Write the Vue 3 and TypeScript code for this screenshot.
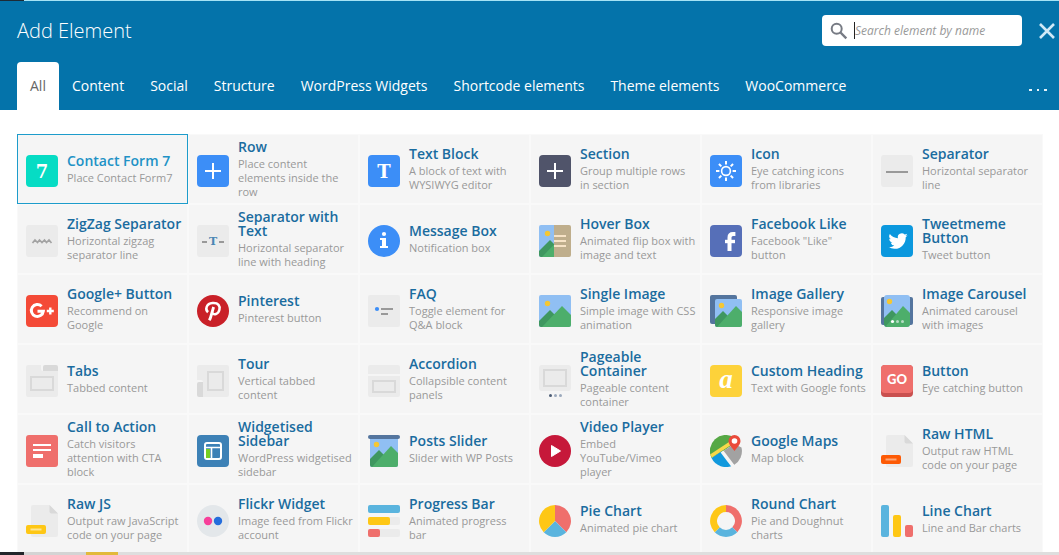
<script setup lang="ts">
import { ref } from 'vue'

interface ElementItem {
  title: string
  text: string
  icon: string
}

const tabs: string[] = [
  'All',
  'Content',
  'Social',
  'Structure',
  'WordPress Widgets',
  'Shortcode elements',
  'Theme elements',
  'WooCommerce',
]
const activeTab = ref('All')
const query = ref('')
const selected = ref('Contact Form 7')

const items: ElementItem[] = [
  { title: 'Contact Form 7', text: 'Place Contact Form7', icon: 'seven' },
  { title: 'Row', text: 'Place content elements inside the row', icon: 'row' },
  { title: 'Text Block', text: 'A block of text with WYSIWYG editor', icon: 'text' },
  { title: 'Section', text: 'Group multiple rows in section', icon: 'section' },
  { title: 'Icon', text: 'Eye catching icons from libraries', icon: 'sun' },
  { title: 'Separator', text: 'Horizontal separator line', icon: 'separator' },
  { title: 'ZigZag Separator', text: 'Horizontal zigzag separator line', icon: 'zigzag' },
  { title: 'Separator with Text', text: 'Horizontal separator line with heading', icon: 'septext' },
  { title: 'Message Box', text: 'Notification box', icon: 'info' },
  { title: 'Hover Box', text: 'Animated flip box with image and text', icon: 'hover' },
  { title: 'Facebook Like', text: 'Facebook "Like" button', icon: 'facebook' },
  { title: 'Tweetmeme Button', text: 'Tweet button', icon: 'twitter' },
  { title: 'Google+ Button', text: 'Recommend on Google', icon: 'gplus' },
  { title: 'Pinterest', text: 'Pinterest button', icon: 'pinterest' },
  { title: 'FAQ', text: 'Toggle element for Q&A block', icon: 'faq' },
  { title: 'Single Image', text: 'Simple image with CSS animation', icon: 'image' },
  { title: 'Image Gallery', text: 'Responsive image gallery', icon: 'gallery' },
  { title: 'Image Carousel', text: 'Animated carousel with images', icon: 'carousel' },
  { title: 'Tabs', text: 'Tabbed content', icon: 'tabs' },
  { title: 'Tour', text: 'Vertical tabbed content', icon: 'tour' },
  { title: 'Accordion', text: 'Collapsible content panels', icon: 'accordion' },
  { title: 'Pageable Container', text: 'Pageable content container', icon: 'pageable' },
  { title: 'Custom Heading', text: 'Text with Google fonts', icon: 'heading' },
  { title: 'Button', text: 'Eye catching button', icon: 'button' },
  { title: 'Call to Action', text: 'Catch visitors attention with CTA block', icon: 'cta' },
  { title: 'Widgetised Sidebar', text: 'WordPress widgetised sidebar', icon: 'sidebar' },
  { title: 'Posts Slider', text: 'Slider with WP Posts', icon: 'slider' },
  { title: 'Video Player', text: 'Embed YouTube/Vimeo player', icon: 'video' },
  { title: 'Google Maps', text: 'Map block', icon: 'maps' },
  { title: 'Raw HTML', text: 'Output raw HTML code on your page', icon: 'rawhtml' },
  { title: 'Raw JS', text: 'Output raw JavaScript code on your page', icon: 'rawjs' },
  { title: 'Flickr Widget', text: 'Image feed from Flickr account', icon: 'flickr' },
  { title: 'Progress Bar', text: 'Animated progress bar', icon: 'progress' },
  { title: 'Pie Chart', text: 'Animated pie chart', icon: 'pie' },
  { title: 'Round Chart', text: 'Pie and Doughnut charts', icon: 'round' },
  { title: 'Line Chart', text: 'Line and Bar charts', icon: 'bars' },
]

const rays: number[] = [0, 45, 90, 135, 180, 225, 270, 315]
</script>

<template>
  <div class="screen">
    <div class="strip-top"></div>
    <main class="panel">
      <header class="header">
        <div class="title-row">
          <h1>Add Element</h1>
          <label class="search">
            <svg class="search-icon" viewBox="0 0 18 18" aria-hidden="true">
              <circle cx="6.7" cy="6.7" r="5" fill="none" stroke="#777b84" stroke-width="2" />
              <path d="M10.5 10.5L16.3 16.3" stroke="#777b84" stroke-width="2.4" />
            </svg>
            <span class="caret"></span>
            <input v-model="query" type="text" placeholder="Search element by name" aria-label="Search element by name" />
          </label>
          <button class="close" type="button" aria-label="Close">
            <svg viewBox="0 0 16 16"><path d="M1 1L15 15M15 1L1 15" stroke="#cfe9f7" stroke-width="2.6" /></svg>
          </button>
        </div>
        <nav class="tabs">
          <button
            v-for="tab in tabs"
            :key="tab"
            type="button"
            class="tab"
            :class="{ active: tab === activeTab }"
            @click="activeTab = tab"
          >{{ tab }}</button>
          <button class="more" type="button" aria-label="More">
            <svg viewBox="0 0 20 4"><path d="M1 1h3v2H1zM9 1h2v2H9zM16 1h3v2h-3z" fill="#e6f3fa" /></svg>
          </button>
        </nav>
      </header>

      <section class="body">
        <ul class="grid">
          <li v-for="item in items" :key="item.title">
            <a href="#" class="card" :class="{ selected: item.title === selected }" @click.prevent="selected = item.title">
              <svg class="icon" viewBox="0 0 32 32" aria-hidden="true">
                <template v-if="item.icon === 'seven'">
                  <rect width="32" height="32" rx="4" fill="#06dcc4" />
                  <text x="16" y="23" class="slab" font-size="18">7</text>
                </template>
                <template v-else-if="item.icon === 'row'">
                  <rect width="32" height="32" rx="4" fill="#3c8ef7" />
                  <path d="M8 16h16M16 8v16" stroke="#fff" stroke-width="2" />
                </template>
                <template v-else-if="item.icon === 'text'">
                  <rect width="32" height="32" rx="4" fill="#3c8ef7" />
                  <text x="16" y="23" class="slab" font-size="18">T</text>
                </template>
                <template v-else-if="item.icon === 'section'">
                  <rect width="32" height="32" rx="4" fill="#50546a" />
                  <path d="M8 16h16M16 8v16" stroke="#fff" stroke-width="2" />
                </template>
                <template v-else-if="item.icon === 'sun'">
                  <rect width="32" height="32" rx="4" fill="#3c8ef7" />
                  <circle cx="16" cy="16" r="4.4" fill="none" stroke="#fff" stroke-width="1.6" />
                  <path
                    v-for="angle in rays"
                    :key="angle"
                    d="M16 6v3.4"
                    stroke="#fff"
                    stroke-width="2"
                    :transform="`rotate(${angle} 16 16)`"
                  />
                </template>
                <template v-else-if="item.icon === 'separator'">
                  <rect width="32" height="32" rx="3" fill="#ebebeb" />
                  <path d="M5 17h22" stroke="#999" stroke-width="2" />
                </template>
                <template v-else-if="item.icon === 'zigzag'">
                  <rect width="32" height="32" rx="3" fill="#ebebeb" />
                  <path d="M6.5 18L9 15L11.500 17.500L13.500 15L16 17.500L18.500 15L20.500 17.500L23 15L25.500 18" fill="none" stroke="#a3a3a3" stroke-width="1.7" />
                </template>
                <template v-else-if="item.icon === 'septext'">
                  <rect width="32" height="32" rx="3" fill="#ebebeb" />
                  <path d="M5 17h5M22 17h5" stroke="#999" stroke-width="2" />
                  <text x="16" y="20" class="slab blue" font-size="11">T</text>
                </template>
                <template v-else-if="item.icon === 'info'">
                  <circle cx="16" cy="16" r="16" fill="#3c8ef7" />
                  <circle cx="16" cy="9" r="2.1" fill="#fff" />
                  <path d="M12 13h6v8h2v2h-8v-2h2v-6h-2z" fill="#fff" />
                </template>
                <template v-else-if="item.icon === 'hover'">
                  <path d="M2 0h13v32H2a2 2 0 0 1-2-2V2a2 2 0 0 1 2-2z" fill="#90bff3" />
                  <path d="M15 0h15a2 2 0 0 1 2 2v28a2 2 0 0 1-2 2H15z" fill="#bfae8c" />
                  <path d="M0 26L11 15l4 4v13H2a2 2 0 0 1-2-2z" fill="#3f9760" />
                  <path d="M3 32L15 19.500v12.500z" fill="#4dae6b" />
                  <circle cx="8.500" cy="8.500" r="2.700" fill="#f5c733" />
                  <path d="M15 11h12M15 16h12M15 21h12" stroke="#f7e3c6" stroke-width="2" />
                </template>
                <template v-else-if="item.icon === 'facebook'">
                  <rect width="32" height="32" rx="4" fill="#566fb8" />
                  <path d="M19.500 26V12.500C19.500 9.800 21 9 23 9h2.400" fill="none" stroke="#fff" stroke-width="4" />
                  <path d="M15 16.500h10" stroke="#fff" stroke-width="3.400" />
                </template>
                <template v-else-if="item.icon === 'twitter'">
                  <rect width="32" height="32" rx="4" fill="#0b98de" />
                  <path
                    transform="translate(7.500 6.500) scale(.8)"
                    d="M24 4.600a10 10 0 0 1-2.800.8 5 5 0 0 0 2.100-2.700c-.9.500-2 1-3.100 1.200a4.900 4.900 0 0 0-8.400 4.500C7.700 8.100 4.100 6.100 1.700 3.100a4.900 4.900 0 0 0 1.500 6.600c-.8 0-1.600-.2-2.200-.6v.1a4.900 4.900 0 0 0 3.900 4.800c-.7.200-1.500.2-2.200.1a4.900 4.900 0 0 0 4.600 3.400A9.900 9.900 0 0 1 0 19.500a14 14 0 0 0 7.500 2.200c9.100 0 14-7.500 14-14v-.6A10 10 0 0 0 24 4.600z"
                    fill="#fff"
                  />
                </template>
                <template v-else-if="item.icon === 'gplus'">
                  <rect width="32" height="32" rx="4" fill="#f44a37" />
                  <path d="M15.600 11.200A6 6 0 1 0 17.300 16.200H11.500" fill="none" stroke="#fff" stroke-width="3" />
                  <path d="M20.800 16h7M24.300 12.500v7" stroke="#fff" stroke-width="2.400" />
                </template>
                <template v-else-if="item.icon === 'pinterest'">
                  <circle cx="16" cy="16" r="16" fill="#c92028" />
                  <path d="M11 17.300C7.800 14.500 9.200 8.600 15.500 8.100C21.500 7.600 23.300 11 22.400 14.800C21.400 19.300 16.700 20.600 15.200 17.700" fill="none" stroke="#fff" stroke-width="2.500" />
                  <path d="M16.600 12L13.700 22C13.300 23.500 12.900 24.300 12.200 25.300" fill="none" stroke="#fff" stroke-width="2.800" />
                </template>
                <template v-else-if="item.icon === 'faq'">
                  <rect width="32" height="32" rx="2" fill="#ebebeb" />
                  <circle cx="9" cy="14" r="2.100" fill="#3c8ef7" />
                  <path d="M13 14h12M13 19h7" stroke="#999" stroke-width="2" />
                </template>
                <template v-else-if="item.icon === 'image'">
                  <rect width="32" height="32" rx="2" fill="#90bff3" />
                  <path d="M0 26L11 15l8 8v9H2a2 2 0 0 1-2-2z" fill="#3f9760" />
                  <path d="M3 32L23 11l9 9v10a2 2 0 0 1-2 2z" fill="#4dae6b" />
                  <circle cx="8.500" cy="8.500" r="2.700" fill="#f5c733" />
                </template>
                <template v-else-if="item.icon === 'gallery'">
                  <rect width="27" height="29" rx="2" fill="#54759e" />
                  <rect x="5" y="4" width="27" height="28" rx="2" fill="#90bff3" />
                  <path d="M5 24l8-8 7 7v9H7a2 2 0 0 1-2-2z" fill="#3f9760" />
                  <path d="M7 32L26 11l6 6v13a2 2 0 0 1-2 2z" fill="#4dae6b" />
                  <circle cx="11.500" cy="10.500" r="2.700" fill="#f5c733" />
                </template>
                <template v-else-if="item.icon === 'carousel'">
                  <rect y="2" width="32" height="28" rx="2" fill="#54759e" />
                  <rect x="3" width="26" height="32" rx="3" fill="#90bff3" />
                  <path d="M3 23l8-8 8 8v9H6a3 3 0 0 1-3-3z" fill="#3f9760" />
                  <path d="M5 31L22 11l7 7v11a3 3 0 0 1-3 3H6z" fill="#4dae6b" />
                  <circle cx="8.500" cy="6.500" r="2.700" fill="#f5c733" />
                  <circle cx="11.500" cy="26.500" r="1.600" fill="#fff" />
                  <circle cx="16.500" cy="26.500" r="1.500" fill="#b5dcc2" />
                  <circle cx="21.500" cy="26.500" r="1.500" fill="#b5dcc2" />
                </template>
                <template v-else-if="item.icon === 'tabs'">
                  <path d="M2 0h13v4a2 2 0 0 0 2 2h15v24a2 2 0 0 1-2 2H2a2 2 0 0 1-2-2V2a2 2 0 0 1 2-2z" fill="#ebebeb" />
                  <path d="M19 0h11a2 2 0 0 1 2 2v4H17V2a2 2 0 0 1 2-2z" fill="#d9d9d9" />
                  <rect x="5" y="12" width="22" height="13" fill="none" stroke="#d9d9d9" stroke-width="2" />
                </template>
                <template v-else-if="item.icon === 'tour'">
                  <path d="M2 0h28a2 2 0 0 1 2 2v28a2 2 0 0 1-2 2H6V17a2 2 0 0 0-2-2H0V2a2 2 0 0 1 2-2z" fill="#ebebeb" />
                  <path d="M2 17h4v15H2a2 2 0 0 1-2-2V19a2 2 0 0 1 2-2z" fill="#d9d9d9" />
                  <rect x="11" y="7" width="15" height="18" fill="none" stroke="#d9d9d9" stroke-width="2" />
                </template>
                <template v-else-if="item.icon === 'accordion'">
                  <path d="M2 0h28a2 2 0 0 1 2 2v7H0V2a2 2 0 0 1 2-2zM0 11h32v19a2 2 0 0 1-2 2H2a2 2 0 0 1-2-2z" fill="#ebebeb" />
                  <rect x="5" y="16" width="22" height="11" fill="none" stroke="#d9d9d9" stroke-width="2" />
                </template>
                <template v-else-if="item.icon === 'pageable'">
                  <rect width="32" height="26" rx="3" fill="#ebebeb" />
                  <rect x="5" y="5" width="22" height="16" fill="none" stroke="#d9d9d9" stroke-width="2" />
                  <circle cx="11.500" cy="30.500" r="1.500" fill="#4b5c75" />
                  <circle cx="16.500" cy="30.500" r="1.500" fill="#9ba9bc" />
                  <circle cx="21.500" cy="30.500" r="1.500" fill="#9ba9bc" />
                </template>
                <template v-else-if="item.icon === 'heading'">
                  <rect width="32" height="32" rx="4" fill="#fdd23a" />
                  <text x="16" y="23" class="slab italic" font-size="27">a</text>
                </template>
                <template v-else-if="item.icon === 'button'">
                  <rect width="32" height="32" rx="4" fill="#c9504f" />
                  <rect width="32" height="28" rx="4" fill="#ef6f6c" />
                  <text x="16" y="19" class="sans" font-size="13">GO</text>
                </template>
                <template v-else-if="item.icon === 'cta'">
                  <rect width="32" height="32" rx="3" fill="#ef6f6c" />
                  <path d="M7 10h18M7 15h18" stroke="#fff" stroke-width="2" />
                  <path d="M7 21h10" stroke="#fff" stroke-width="4" />
                </template>
                <template v-else-if="item.icon === 'sidebar'">
                  <rect width="32" height="32" rx="4" fill="#3d81b6" />
                  <rect x="8" y="8" width="16" height="16" rx="2" fill="none" stroke="#fff" stroke-width="2" />
                  <path d="M8 12.500h16M14.500 13v11" stroke="#fff" stroke-width="1.600" />
                  <path d="M9 14h4v9H9z" fill="#76cf21" />
                </template>
                <template v-else-if="item.icon === 'slider'">
                  <path d="M2 3h28v27a2 2 0 0 1-2 2H4a2 2 0 0 1-2-2z" fill="#90bff3" />
                  <path d="M2 24l9-9 8 8v9H4a2 2 0 0 1-2-2z" fill="#3f9760" />
                  <path d="M4 32L23 11l7 7v12a2 2 0 0 1-2 2z" fill="#4dae6b" />
                  <rect width="32" height="4" rx="2" fill="#54759e" />
                  <circle cx="8.500" cy="9.500" r="2.700" fill="#f5c733" />
                </template>
                <template v-else-if="item.icon === 'video'">
                  <circle cx="16" cy="16" r="16" fill="#c6183a" />
                  <path d="M12.500 10.500L21.500 16L12.500 21.500z" fill="#fff" stroke="#fff" stroke-linejoin="round" />
                </template>
                <template v-else-if="item.icon === 'maps'">
                  <path d="M1.500 23A16 16 0 0 1 24 2.200L25 8L12 17z" fill="#56a845" />
                  <path d="M12 17L24 9L31.500 12.500A16 16 0 0 1 24 30z" fill="#a2a2a2" />
                  <path d="M1.500 23L12 16L23 30.400A16 16 0 0 1 1.500 23z" fill="#1199dd" />
                  <path d="M1 21L20 8.500" stroke="#f6d84a" stroke-width="3.500" />
                  <path d="M12 16.500L23 31" stroke="#f5f5f5" stroke-width="3.500" />
                  <path d="M24.500 16C22 12.500 18.500 9.500 18.500 6a6 6 0 0 1 12 0C30.500 9.500 27 12.500 24.500 16z" fill="#ea4b3b" />
                  <circle cx="24.500" cy="6" r="2.800" fill="#fff" />
                </template>
                <template v-else-if="item.icon === 'rawhtml' || item.icon === 'rawjs'">
                  <path d="M7 0h16.500L32 8.500V30a2 2 0 0 1-2 2H7a2 2 0 0 1-2-2V2a2 2 0 0 1 2-2z" fill="#ebebeb" />
                  <path d="M23.500 0L32 8.500h-6.500a2 2 0 0 1-2-2z" fill="#d9d9d9" />
                  <rect y="20" width="20" height="9" rx="2" :fill="item.icon === 'rawjs' ? '#fec715' : '#fd5a05'" />
                  <path d="M4.500 24.500h11" :stroke="item.icon === 'rawjs' ? '#ffe48f' : '#ffa574'" stroke-width="2" />
                </template>
                <template v-else-if="item.icon === 'flickr'">
                  <circle cx="16" cy="16" r="16" fill="#e3e7ea" />
                  <circle cx="11" cy="16" r="4.200" fill="#f73f9a" />
                  <circle cx="21" cy="16" r="4.200" fill="#246ddc" />
                </template>
                <template v-else-if="item.icon === 'progress'">
                  <rect width="32" height="8" rx="2" fill="#5ab4de" />
                  <rect y="12" width="32" height="8" rx="2" fill="#ebebeb" />
                  <rect y="12" width="22" height="8" rx="2" fill="#fec715" />
                  <rect y="24" width="32" height="8" rx="2" fill="#ebebeb" />
                  <rect y="24" width="12" height="8" rx="2" fill="#ef6f6c" />
                </template>
                <template v-else-if="item.icon === 'pie'">
                  <path d="M16 16V0A16 16 0 0 1 27.300 27.300z" fill="#ef6f6c" />
                  <path d="M16 16L27.300 27.300A16 16 0 0 1 4.700 27.300z" fill="#5ab4de" />
                  <path d="M16 16L4.700 27.300A16 16 0 0 1 16 0z" fill="#fec715" />
                </template>
                <template v-else-if="item.icon === 'round'">
                  <path d="M16 3.500A12.500 12.500 0 0 1 24.800 24.800" fill="none" stroke="#ef6f6c" stroke-width="7" />
                  <path d="M24.800 24.800A12.500 12.500 0 0 1 7.200 24.800" fill="none" stroke="#5ab4de" stroke-width="7" />
                  <path d="M7.200 24.800A12.500 12.500 0 0 1 16 3.500" fill="none" stroke="#fec715" stroke-width="7" />
                </template>
                <template v-else>
                  <rect width="8" height="32" rx="2" fill="#5ab4de" />
                  <rect x="12" y="10" width="8" height="22" rx="2" fill="#fec715" />
                  <rect x="24" y="20" width="8" height="12" rx="2" fill="#ef6f6c" />
                </template>
              </svg>
              <span class="copy">
                <span class="name">{{ item.title }}</span>
                <span class="desc">{{ item.text }}</span>
              </span>
            </a>
          </li>
        </ul>
      </section>
    </main>
    <div class="strip-bottom"></div>
  </div>
</template>

<style>
body {
  background: #fff;
}
</style>

<style scoped>
* {
  box-sizing: border-box;
}
.screen {
  display: flex;
  flex-direction: column;
  height: 100vh;
  overflow: hidden;
  font-family: "Open Sans", "Noto Sans", sans-serif;
}
.strip-top {
  flex: none;
  height: 1px;
  background: linear-gradient(to right, #1d2b36 24px, #a5e3f5 24px);
}
.strip-bottom {
  flex: none;
  height: 3px;
  background: linear-gradient(to right, #23262b 24px, #d4d4d4 24px, #d4d4d4 86px, #e2b93a 86px, #e2b93a 118px, #dedede 118px);
}
.panel {
  display: flex;
  flex-direction: column;
  flex: 1;
  min-height: 0;
  background: #fff;
}
.header {
  flex: none;
  background: #0473aa;
}
.title-row {
  display: flex;
  align-items: center;
  height: 61px;
  padding: 0 4px 2px 17px;
}
h1 {
  flex: 1;
  margin: 0;
  font-size: 20px;
  font-weight: 300;
  line-height: 28px;
  color: #fff;
}
.search {
  display: flex;
  align-items: center;
  width: 200px;
  height: 31px;
  padding: 0 8px;
  border-radius: 4px;
  background: #fff;
}
.search-icon {
  flex: none;
  width: 18px;
  height: 18px;
  margin-right: 6px;
}
.caret {
  flex: none;
  width: 1px;
  height: 17px;
  background: #222;
}
.search input {
  flex: 1;
  min-width: 0;
  padding: 0;
  border: 0;
  outline: 0;
  background: none;
  font: italic 12px "Open Sans", sans-serif;
  color: #333;
}
.search input::placeholder {
  color: #999;
  opacity: 1;
}
button {
  padding: 0;
  border: 0;
  background: none;
  font-family: inherit;
  cursor: pointer;
}
.close {
  width: 16px;
  height: 16px;
  margin-left: 17px;
}
.close svg,
.more svg {
  display: block;
  width: 100%;
}
.tabs {
  display: flex;
  height: 48px;
  padding: 0 11px 0 17px;
}
.tab {
  padding: 0 13px;
  border-radius: 4px 4px 0 0;
  font-size: 14px;
  line-height: 20px;
  white-space: nowrap;
  color: #fff;
}
.tab.active {
  background: #fff;
  color: #666;
}
.more {
  align-self: center;
  width: 20px;
  margin-left: auto;
  padding-top: 7px;
}
.body {
  flex: 1;
  min-height: 0;
  padding: 24px 16px 0 17px;
  overflow: hidden;
}
.grid {
  display: grid;
  grid-template-columns: repeat(6, minmax(0, 1fr));
  grid-auto-rows: 70px;
  margin: 0;
  padding: 0;
  list-style: none;
}
.card {
  display: flex;
  align-items: center;
  gap: 9px;
  height: 100%;
  padding: 0 4px 0 8px;
  border: 1px solid #f9f9f9;
  background: #f5f5f5;
  text-decoration: none;
}
.card.selected {
  border-color: #1d9ccb;
}
.icon {
  flex: none;
  width: 32px;
  height: 32px;
  margin-top: 4px;
}
.copy {
  flex: 1;
  min-width: 0;
}
.name,
.desc {
  display: block;
  line-height: 14px;
}
.name {
  margin-bottom: 3px;
  font-size: 14px;
  font-weight: 600;
  color: #1a6c9f;
}
.selected .name {
  color: #2192c6;
}
.desc {
  font-size: 11px;
  color: #999;
}
.slab {
  font-family: "DejaVu Serif", serif;
  font-weight: 700;
  fill: #fff;
  text-anchor: middle;
}
.blue {
  fill: #4a86b4;
}
.italic {
  font-family: "Liberation Serif", serif;
  font-style: italic;
}
.sans {
  font-family: Lato, sans-serif;
  font-weight: 900;
  fill: #fff;
  text-anchor: middle;
}
</style>
